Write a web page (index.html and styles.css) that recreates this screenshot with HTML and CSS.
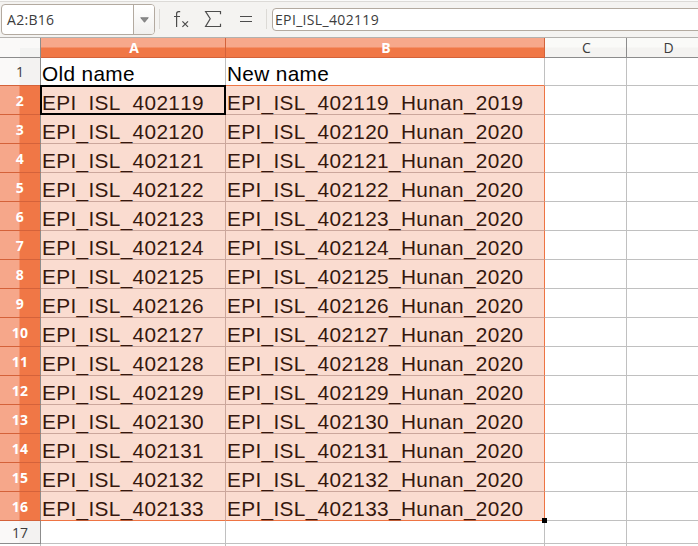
FILE: index.html
```
<!DOCTYPE html>
<html lang="en">
<head>
<meta charset="utf-8">
<title>Spreadsheet</title>
<link rel="stylesheet" href="styles.css">
</head>
<body>
<div class="app">
  <div class="toolbar">
    <div class="namebox"><span class="namebox-text">A2:B16</span><span class="drop"><svg width="9" height="6" viewBox="0 0 9 6"><path d="M0.7 0.7H8.3L4.5 5.3Z" fill="#8a8a8a" stroke="#6a6a6a" stroke-width=".7"/></svg></span></div>
    <span class="sep"></span>
    <svg class="icons" width="96" height="24" viewBox="0 0 96 24" fill="none" stroke="#4c4c4c" stroke-width="1.2">
      <path d="M10.2 4.6H8.6Q6.6 4.6 6.6 6.8V20M4 9.5H10M12.4 14.3L18 19.9M18 14.3L12.4 19.9"/>
      <path d="M50.5 7.3V4.5H35.6L40.2 11.8L35.6 19.5H50.5V16.7"/>
      <path d="M70 9.5H82M70 14.5H82"/>
    </svg>
    <span class="sep"></span>
    <div class="input"><span class="input-text">EPI_ISL_402119</span></div>
  </div>
  <div class="sheet" id="sheet">
    <div class="corner"></div>
    <div class="col sel">A</div>
    <div class="col sel">B</div>
    <div class="col">C</div>
    <div class="col">D</div>
  </div>
</div>
<script src="sheet.js"></script>
</body>
</html>
```
FILE: styles.css
```
* { box-sizing: border-box; }
body { margin: 0; background: #fff; overflow: hidden; }
.app { width: 698px; height: 546px; overflow: hidden; font-family: "Open Sans", "Noto Sans", sans-serif; font-size: 14px; color: #3c3c3c; }
.toolbar { height: 38px; display: flex; background: #f4f3f1; border-top: 1px solid #fafaf9; border-bottom: 1px solid #b3b1ae; box-shadow: inset 0 1px #dcdad7; }
.namebox { display: flex; width: 154px; height: 31px; margin: 3px 0 0 1px; border: 1px solid #b3aaa0; border-radius: 4px; background: #fff; }
.namebox-text { flex: 1; padding-left: 5px; line-height: 30px; letter-spacing: .3px; }
.drop { width: 21px; border-left: 1px solid #b3aaa0; border-radius: 0 3px 3px 0; background: linear-gradient(#fff, #f1f0ee); display: flex; align-items: center; justify-content: center; }
.sep { width: 1px; height: 20px; margin: 8px 0 0 4px; background: #dcdad6; }
.icons { margin: 6px 0 0 10px; }
.icons + .sep { margin-left: 0; }
.input { flex: 1; height: 23px; margin: 7px -6px 0 5px; border: 1px solid #b3aaa0; border-radius: 4px; background: #fff; }
.input-text { display: block; padding-left: 2px; line-height: 22px; letter-spacing: .34px; }
.sheet { display: grid; grid-template-columns: 41px 185px 319px 82px 82px; grid-template-rows: 20px 28px repeat(15, 29px) 23px; width: 709px; }
.corner { border-right: 1px solid #8c8c8c; border-bottom: 1px solid #8c8c8c; background: linear-gradient(#f3f3f2, #f3f3f2) 20px 10px no-repeat #faf9f8; }
.col { text-align: center; padding-left: 2px; line-height: 19px; border-right: 1px solid #8c8c8c; border-bottom: 1px solid #8c8c8c; background: linear-gradient(#fafaf8 9px, #f4f3f1 10px); }
.col.sel { color: #fff; font-weight: 700; border-color: #d4623a; background: linear-gradient(#f7a88b 9px, #f07746 10px); }
.row { display: flex; align-items: center; justify-content: center; border-right: 1px solid #8c8c8c; border-bottom: 1px solid #8c8c8c; background: linear-gradient(90deg, #faf9f8 19px, #f3f2f1 20px); }
.row.sel { color: #fff; font-weight: 700; border-bottom-color: #d4623a; background: linear-gradient(90deg, #f6a78a 19px, #f07746 20px); letter-spacing: .3px; }
.row.before { border-bottom-color: #d4623a; }
.cell { display: flex; align-items: flex-end; padding-left: 1px; border-right: 1px solid #c0c0c0; border-bottom: 1px solid #c0c0c0; font: 20.8px/22px "Liberation Sans", sans-serif; font-kerning: none; letter-spacing: .34px; color: #000; white-space: pre; }
.cell.sel { position: relative; background: #fadcd0; border-color: #cba79c; color: #35170d; }
.cell.above { border-bottom-color: #ee7443; }
.cell.right { border-right-color: #ee7443; }
.cell.last { border-bottom-color: #ee7443; }
.cell.active::before { content: ""; position: absolute; inset: -1px -1px -1px -1px; border: 2px solid #000; }
.handle { position: absolute; right: -3px; bottom: -3px; width: 5px; height: 5px; background: #000; z-index: 2; }
.tail { height: 2px; border-right: 1px solid #c0c0c0; }
```
FILE: sheet.js
```
const sheet = document.getElementById("sheet");
function add(cls, text) {
  const el = document.createElement("div");
  el.className = cls;
  el.textContent = text;
  sheet.appendChild(el);
  return el;
}
for (let r = 1; r <= 17; r++) {
  const sel = r >= 2 && r <= 16;
  add("row" + (sel ? " sel" : r === 1 ? " before" : ""), r);
  const id = "EPI_ISL_" + (402117 + r);
  const a = r === 1 ? "Old name" : sel ? id : "";
  const b = r === 1 ? "New name" : sel ? id + "_Hunan_" + (r === 2 ? 2019 : 2020) : "";
  const state = (sel ? " sel" : "") + (r === 1 ? " above" : "") + (r === 16 ? " last" : "");
  add("cell" + state + (r === 2 ? " active" : ""), a);
  const end = add("cell" + state + (sel ? " right" : ""), b);
  if (r === 16) {
    const handle = document.createElement("span");
    handle.className = "handle";
    end.appendChild(handle);
  }
  add("cell", "");
  add("cell", "");
}
for (let c = 0; c < 5; c++) add("tail", "");
```
